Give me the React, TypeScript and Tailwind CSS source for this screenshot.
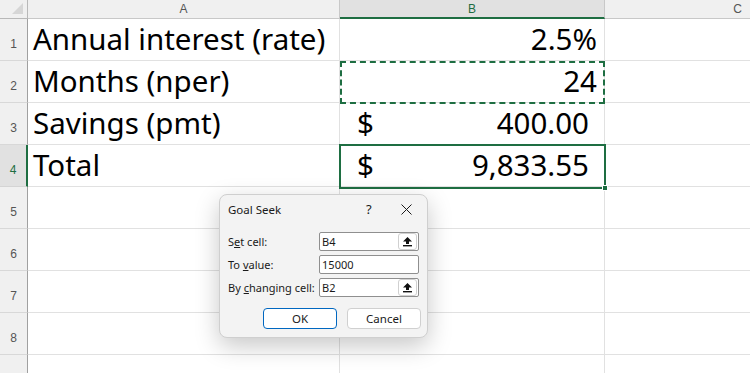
import React from "react";

const cellFont = { fontFamily: '"Noto Sans", "Liberation Sans", sans-serif' };
const numFont = { fontFamily: '"Liberation Sans", Arial, sans-serif' };
const uiFont = { fontFamily: '"Noto Sans", "Open Sans", sans-serif' };

function UpBtn() {
  return (
    <div className="w-[19px] h-[17px] mr-[1px] rounded-[3px] bg-white border border-[#d0d0d0] flex items-center justify-center">
      <svg width="11" height="11" viewBox="0 0 11 11">
        <path d="M5.5 1 L10 5.5 L7 5.5 L7 8 L4 8 L4 5.5 L1 5.5 Z" fill="#111" />
        <rect x="1" y="9" width="9" height="1.4" fill="#111" />
      </svg>
    </div>
  );
}

function Field({ label, value, btn }: { label: React.ReactNode; value: string; btn?: boolean }) {
  return (
    <div className="flex items-center h-[19px]">
      <div className="w-[93px] text-[11px] text-[#1a1a1a] leading-none whitespace-nowrap">{label}</div>
      <div className="w-[102px] h-[19px] bg-white border border-[#8f8f8f] rounded-[2px] flex items-center justify-between">
        <span className="pl-[2px] text-[11px] text-[#1a1a1a] leading-none">{value}</span>
        {btn && <UpBtn />}
      </div>
    </div>
  );
}

export default function App() {
  const rows: { a: string; b?: React.ReactNode; n: number }[] = [
    { n: 1, a: "Annual interest (rate)", b: <span className="pr-[7px]">2.5%</span> },
    { n: 2, a: "Months (nper)", b: <span className="pr-[7px]">24</span> },
    { n: 3, a: "Savings (pmt)", b: "acc1" },
    { n: 4, a: "Total", b: "acc2" },
    { n: 5, a: "" },
    { n: 6, a: "" },
    { n: 7, a: "" },
    { n: 8, a: "" },
    { n: 9, a: "" },
  ];

  return (
    <div className="relative w-[750px] h-[373px] overflow-hidden bg-white">
      {/* header */}
      <div className="flex h-[19px]" style={numFont}>
        <div className="w-[28px] h-full bg-[#f0f0f0] border-r border-b border-[#b8b8b8] flex items-end justify-end">
          <svg width="12" height="12" viewBox="0 0 12 12" className="mr-[3px] mb-[3px]">
            <path d="M11 0 L11 11 L0 11 Z" fill="#d6d6d6" />
          </svg>
        </div>
        <div className="w-[312px] h-full bg-[#f0f0f0] border-r border-b border-[#c8c8c8] flex items-center justify-center text-[12px] text-[#555]">
          A
        </div>
        <div className="w-[265px] h-full bg-[#e1e1e1] border-r border-[#c8c8c8] border-b-2 border-b-[#1e6e42] flex items-center justify-center text-[12px] text-[#1e6e42]">
          B
        </div>
        <div className="flex-1 h-full bg-[#f0f0f0] border-b border-[#c8c8c8] flex items-center justify-end pr-[8px] text-[12px] text-[#555]">
          C
        </div>
      </div>

      {rows.map((r) => (
        <div key={r.n} className="flex h-[42px]">
          <div
            className={
              r.n === 4
                ? "w-[28px] h-full bg-[#e1e1e1] border-r-2 border-[#1e6e42] border-b border-b-[#d4d4d4] flex items-end justify-center pb-[7px] text-[12px] text-[#1e6e42]"
                : "w-[28px] h-full bg-[#f0f0f0] border-r border-[#a0a0a0] border-b border-b-[#d8d8d8] flex items-end justify-center pb-[7px] text-[12px] text-[#555]"
            }
            style={numFont}
          >
            {r.n < 9 ? r.n : ""}
          </div>
          <div
            className="w-[312px] h-full border-r border-b border-[#e1e1e1] flex items-end pl-[5px] pb-[2px] text-[29.5px] leading-[38px] text-black"
            style={cellFont}
          >
            {r.a}
          </div>
          <div
            className="w-[265px] h-full border-r border-b border-[#e1e1e1] flex items-end justify-end pb-[2px] text-[29.5px] leading-[38px] text-black"
            style={cellFont}
          >
            {r.b === "acc1" ? (
              <div className="w-full flex justify-between pl-[17px] pr-[15px]">
                <span>$</span>
                <span>400.00</span>
              </div>
            ) : r.b === "acc2" ? (
              <div className="w-full flex justify-between pl-[17px] pr-[15px]">
                <span>$</span>
                <span>9,833.55</span>
              </div>
            ) : (
              r.b
            )}
          </div>
          <div className="flex-1 h-full border-b border-[#e1e1e1]" />
        </div>
      ))}

      {/* copy (marching ants) border around B2 */}
      <div className="absolute left-[340px] top-[61px] w-[265px] h-[43px] border-2 border-dashed border-[#1e6e42]" />
      {/* active cell B4 */}
      <div className="absolute left-[339px] top-[144px] w-[267px] h-[45px] border-2 border-[#1e6e42]" />
      <div className="absolute left-[602px] top-[185px] w-[6px] h-[6px] bg-[#1e6e42] border border-white" />

      {/* Goal Seek dialog */}
      <div
        className="absolute left-[219px] top-[194px] w-[209px] h-[144px] rounded-[8px] bg-[#f3f3f3] border border-[#cfcfcf] shadow-[0_8px_24px_rgba(0,0,0,0.22)] flex flex-col px-[8px]"
        style={uiFont}
      >
        <div className="h-[29px] flex items-center relative">
          <span className="text-[11.5px] text-[#1a1a1a]">Goal Seek</span>
          <span className="absolute left-[138px] text-[13px] text-[#1a1a1a]">?</span>
          <svg className="absolute left-[173px]" width="11" height="11" viewBox="0 0 11 11">
            <path d="M0.5 0.5 L10.5 10.5 M10.5 0.5 L0.5 10.5" stroke="#1a1a1a" strokeWidth="1" />
          </svg>
        </div>
        <div className="mt-[8px] flex flex-col gap-[4px]">
          <Field
            label={
              <span>
                S<span className="underline">e</span>t cell:
              </span>
            }
            value="B4"
            btn
          />
          <Field
            label={
              <span>
                To <span className="underline">v</span>alue:
              </span>
            }
            value="15000"
          />
          <Field
            label={
              <span>
                By <span className="underline">c</span>hanging cell:
              </span>
            }
            value="B2"
            btn
          />
        </div>
        <div className="mt-[11px] flex justify-end gap-[10px] mr-[-2px]">
          <button className="w-[74px] h-[21px] rounded-[4px] bg-white border border-[#0067c0] text-[11.5px] text-[#1a1a1a] flex items-center justify-center">
            OK
          </button>
          <button className="w-[74px] h-[21px] rounded-[4px] bg-white border border-[#d0d0d0] text-[11.5px] text-[#1a1a1a] flex items-center justify-center">
            Cancel
          </button>
        </div>
      </div>
    </div>
  );
}
